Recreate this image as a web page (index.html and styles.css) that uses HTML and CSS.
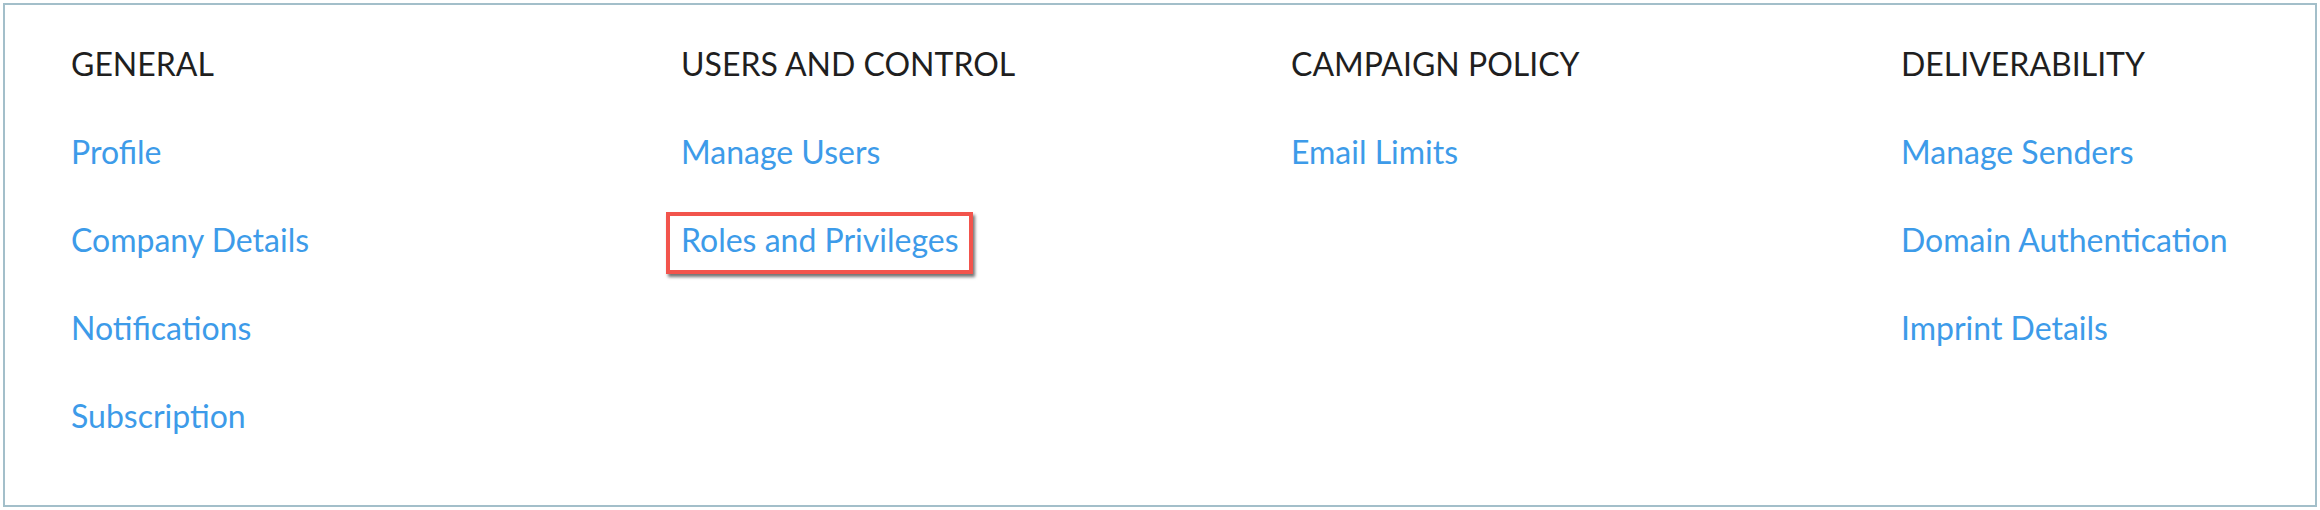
FILE: index.html
```html
<!DOCTYPE html>
<html lang="en">
<head>
<meta charset="utf-8">
<title>Settings</title>
<link rel="stylesheet" href="styles.css">
</head>
<body>
<div class="panel">
  <section class="col">
    <h2 class="title">GENERAL</h2>
    <ul class="links">
      <li><a class="link" href="#">Profile</a></li>
      <li><a class="link" href="#">Company Details</a></li>
      <li><a class="link" href="#">Notifications</a></li>
      <li><a class="link" href="#">Subscription</a></li>
    </ul>
  </section>
  <section class="col">
    <h2 class="title">USERS AND CONTROL</h2>
    <ul class="links">
      <li><a class="link" href="#">Manage Users</a></li>
      <li><a class="link highlight" href="#">Roles and Privileges</a></li>
    </ul>
  </section>
  <section class="col">
    <h2 class="title">CAMPAIGN POLICY</h2>
    <ul class="links">
      <li><a class="link" href="#">Email Limits</a></li>
    </ul>
  </section>
  <section class="col">
    <h2 class="title">DELIVERABILITY</h2>
    <ul class="links">
      <li><a class="link" href="#">Manage Senders</a></li>
      <li><a class="link" href="#">Domain Authentication</a></li>
      <li><a class="link" href="#">Imprint Details</a></li>
    </ul>
  </section>
</div>
</body>
</html>
```

FILE: styles.css
```css
html, body {
  margin: 0;
  padding: 0;
  background: #ffffff;
}
body {
  padding: 3px;
  font-family: Lato, "Open Sans", "Liberation Sans", sans-serif;
}
.panel {
  box-sizing: border-box;
  width: 2314px;
  height: 504px;
  border: 2px solid #a3bfca;
  padding: 41px 0 0 66px;
  display: grid;
  grid-template-columns: 610px 610px 610px 1fr;
  align-items: start;
  font-size: 32px;
  line-height: 36px;
}
.col {
  display: flex;
  flex-direction: column;
  gap: 52px;
}
.title {
  margin: 0;
  font-size: 32px;
  line-height: 36px;
  font-weight: 400;
  color: #1f1f1f;
}
.links {
  list-style: none;
  margin: 0;
  padding: 0;
  display: flex;
  flex-direction: column;
  gap: 52px;
}
.links li {
  font-size: 32px;
  line-height: 36px;
  height: 36px;
}
.link {
  font-size: 32px;
  line-height: 36px;
  color: #3d9be9;
  text-decoration: none;
}
.highlight {
  position: relative;
  display: inline-block;
  vertical-align: top;
}
.highlight::after {
  content: "";
  position: absolute;
  left: -15px;
  right: -14px;
  top: -10px;
  bottom: -16px;
  border: 4px solid #f2544c;
  box-shadow: 2px 3px 3px rgba(0, 0, 0, 0.55);
}
```
